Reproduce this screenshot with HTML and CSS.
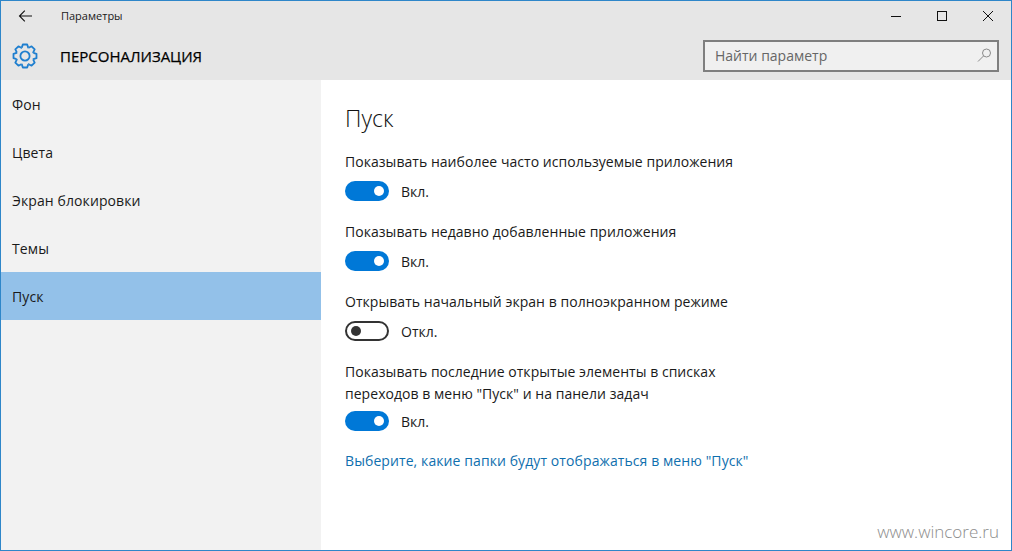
FILE: index.html
```html
<!DOCTYPE html>
<html lang="ru">
<head>
<meta charset="utf-8">
<title>Параметры</title>
<link rel="stylesheet" href="styles.css">
</head>
<body>
<div class="window">
  <header class="head">
    <div class="titlebar">
      <svg class="back" width="16" height="14" viewBox="0 0 16 14"><path d="M14 7H1.5M6.8 1.7 1.5 7l5.3 5.3" fill="none" stroke="#111" stroke-width="1.1"/></svg>
      <span class="apptitle">Параметры</span>
      <div class="winbtns">
        <svg width="12" height="12" viewBox="0 0 12 12"><path d="M1 6.5h10" stroke="#111" stroke-width="1"/></svg>
        <svg width="12" height="12" viewBox="0 0 12 12"><rect x="1.5" y="1.5" width="9" height="9" fill="none" stroke="#111" stroke-width="1"/></svg>
        <svg width="12" height="12" viewBox="0 0 12 12"><path d="M1 1l10 10M11 1 1 11" stroke="#111" stroke-width="1"/></svg>
      </div>
    </div>
    <div class="subbar">
      <svg class="gear" width="26" height="26" viewBox="-13 -13 26 26">
        <defs><path id="tooth" d="M-3.2-8.4-2.2-11.5H2.2L3.2-8.4 3.68-8.2"/></defs>
        <g fill="none" stroke="#1f7fcf" stroke-width="1.8" stroke-linejoin="round">
          <use href="#tooth"/>
          <use href="#tooth" transform="rotate(45)"/>
          <use href="#tooth" transform="rotate(90)"/>
          <use href="#tooth" transform="rotate(135)"/>
          <use href="#tooth" transform="rotate(180)"/>
          <use href="#tooth" transform="rotate(225)"/>
          <use href="#tooth" transform="rotate(270)"/>
          <use href="#tooth" transform="rotate(315)"/>
          <circle r="4.6"/>
        </g>
      </svg>
      <h2 class="section">ПЕРСОНАЛИЗАЦИЯ</h2>
      <div class="search">
        <span>Найти параметр</span>
        <svg width="16" height="16" viewBox="0 0 16 16"><circle cx="10.5" cy="6" r="4" fill="none" stroke="#8a8a8a" stroke-width="1"/><path d="M7.6 8.9 2 14.5" stroke="#8a8a8a" stroke-width="1"/></svg>
      </div>
    </div>
  </header>
  <div class="body">
    <nav class="side">
      <a class="item">Фон</a>
      <a class="item">Цвета</a>
      <a class="item">Экран блокировки</a>
      <a class="item">Темы</a>
      <a class="item active">Пуск</a>
    </nav>
    <main class="main">
      <h1 class="title">Пуск</h1>
      <section class="setting">
        <p class="label">Показывать наиболее часто используемые приложения</p>
        <div class="state"><span class="toggle on"></span><span>Вкл.</span></div>
      </section>
      <section class="setting">
        <p class="label">Показывать недавно добавленные приложения</p>
        <div class="state"><span class="toggle on"></span><span>Вкл.</span></div>
      </section>
      <section class="setting">
        <p class="label">Открывать начальный экран в полноэкранном режиме</p>
        <div class="state"><span class="toggle off"></span><span>Откл.</span></div>
      </section>
      <section class="setting multi">
        <p class="label">Показывать последние открытые элементы в списках<br>переходов в меню "Пуск" и на панели задач</p>
        <div class="state"><span class="toggle on"></span><span>Вкл.</span></div>
      </section>
      <a class="link">Выберите, какие папки будут отображаться в меню "Пуск"</a>
      <span class="mark">www.wincore.ru</span>
    </main>
  </div>
</div>
</body>
</html>
```
FILE: styles.css
```css
* { box-sizing: border-box; }
html, body { margin: 0; height: 100%; }
body { font-family: "Open Sans", "Noto Sans", sans-serif; color: #1a1a1a; background: #fff; }
.window { width: 1012px; height: 551px; border: 1px solid #2e86c9; display: flex; flex-direction: column; overflow: hidden; }
.head { height: 79px; background: #e6e6e6; flex: none; }
.titlebar { height: 31px; display: flex; align-items: center; padding-left: 17px; padding-bottom: 2px; }
.back { flex: none; }
.apptitle { font-size: 11px; margin-left: 27px; }
.winbtns { margin-left: auto; margin-top: 1px; display: flex; gap: 34px; padding-right: 17px; align-items: center; }
.subbar { height: 48px; display: flex; align-items: center; padding-left: 11px; padding-right: 12px; }
.gear { flex: none; }
.section { font-size: 15px; font-weight: 400; margin: 0 0 0 22px; color: #000; -webkit-text-stroke: 0.25px #000; }
.search { margin-left: auto; width: 296px; height: 32px; border: 2px solid #7f7f7f; background: #f0f0f0; display: flex; align-items: center; justify-content: space-between; padding: 0 5px 2px 10px; font-size: 14px; color: #666; }
.body { flex: 1; display: flex; min-height: 0; }
.side { width: 320px; background: #f2f2f2; display: flex; flex-direction: column; flex: none; }
.item { height: 48px; display: flex; align-items: center; padding-left: 11px; font-size: 14px; letter-spacing: .1px; color: #1a1a1a; }
.item.active { background: #93c1e9; }
.main { flex: 1; position: relative; padding: 23px 0 0 24px; }
.title { font-size: 23px; font-weight: 300; margin: 0 0 18px; line-height: 30px; color: #111; }
.setting { margin-bottom: 12px; }
.label { margin: 0; font-size: 14px; line-height: 22px; letter-spacing: .04px; }
.state { display: flex; align-items: center; gap: 12px; height: 36px; font-size: 14px; }
.multi .state { margin-top: -2px; }
.toggle { width: 44px; height: 20px; border-radius: 10px; position: relative; flex: none; }
.toggle::after { content: ""; position: absolute; width: 10px; height: 10px; border-radius: 50%; top: 5px; }
.toggle.on { background: #0078d7; }
.toggle.on::after { background: #fff; right: 5px; }
.toggle.off { border: 2px solid #333; }
.toggle.off::after { background: #333; left: 4px; top: 3px; }
.link { font-size: 14px; letter-spacing: .09px; color: #0f6fae; display: block; margin-top: 7px; }
.mark { position: absolute; right: 12px; bottom: 7px; font-size: 17px; font-weight: 300; color: #8c8c8c; }
```
